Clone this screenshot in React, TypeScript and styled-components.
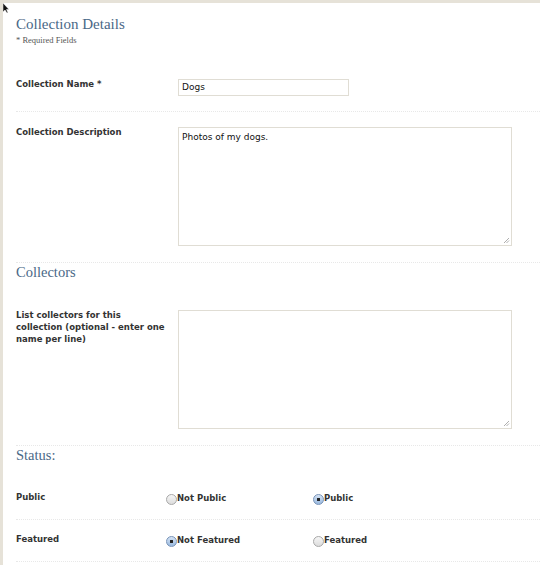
import React from 'react'
import styled, { createGlobalStyle } from 'styled-components'

const GlobalStyle = createGlobalStyle`
  html, body {
    margin: 0;
    padding: 0;
    background: #ffffff;
  }
  body {
    font-family: "DejaVu Sans", Verdana, sans-serif;
    color: #333;
  }
`

const Page = styled.div`
  position: relative;
  width: 540px;
  height: 565px;
  box-sizing: border-box;
  border-top: 3px solid #e6e2d8;
  border-left: 3px solid #e6e2d8;
  overflow: hidden;
  background: #fff;
`

const Content = styled.div`
  padding-left: 13px;
`

const TitleBlock = styled.div`
  height: 61px;
  box-sizing: border-box;
  padding-top: 12px;
`

const Heading = styled.h2<{ $size?: number }>`
  margin: 0;
  font-family: "Liberation Serif", "Times New Roman", serif;
  font-weight: normal;
  font-size: ${p => p.$size ?? 14.5}px;
  line-height: 18px;
  color: #4a6887;
`

const Required = styled.div`
  margin-top: 2px;
  font-family: "Liberation Serif", "Times New Roman", serif;
  font-size: 8.5px;
  color: #555;
`

const SectionHead = styled.div`
  height: 32px;
  box-sizing: border-box;
`

const Row = styled.div<{ $pad?: number }>`
  display: grid;
  grid-template-columns: 162px 1fr;
  padding: 15px 0 ${p => p.$pad ?? 15}px;
  border-bottom: 1px dotted #e8e8e8;
`

const RadioRow = styled.div`
  display: grid;
  grid-template-columns: 150px 147px 147px;
  align-items: start;
  height: 42px;
  box-sizing: border-box;
  padding-top: 14px;
  border-bottom: 1px dotted #e8e8e8;
`

const Label = styled.div`
  font-size: 8.5px;
  font-weight: bold;
  line-height: 12px;
  color: #333;
  margin-top: -1px;
  padding-right: 10px;
`

const TextInput = styled.div`
  width: 171px;
  height: 17px;
  box-sizing: border-box;
  border: 1px solid #e0ddd4;
  font-size: 9px;
  line-height: 15px;
  padding-left: 3px;
  color: #111;
`

const TextArea = styled.div`
  position: relative;
  width: 334px;
  height: 119px;
  box-sizing: border-box;
  border: 1px solid #e0ddd4;
  font-size: 9px;
  line-height: 12px;
  padding: 3px 3px;
  color: #111;
`

const Grip = styled.svg`
  position: absolute;
  right: 1px;
  bottom: 1px;
`

const Option = styled.label`
  display: flex;
  align-items: center;
  font-size: 8.5px;
  font-weight: bold;
  line-height: 12px;
  color: #333;
  margin-top: -1px;
`

const RadioDot = styled.span<{ $on?: boolean }>`
  display: inline-block;
  width: 11px;
  height: 11px;
  box-sizing: border-box;
  border-radius: 50%;
  margin-top: 3px;
  border: 1px solid ${p => (p.$on ? '#7893b8' : '#a8a8a8')};
  background: ${p =>
    p.$on
      ? 'radial-gradient(circle at 50% 50%, #222 0 1.4px, transparent 1.8px), linear-gradient(#d6e4f5, #98b8de)'
      : 'linear-gradient(#f6f6f6, #dcdcdc)'};
`

const Cursor = styled.svg`
  position: absolute;
  left: 0;
  top: 0;
`

const Resize = () => (
  <Grip width="7" height="7" viewBox="0 0 7 7">
    <path d="M6 1 L1 6 M6 3.5 L3.5 6" stroke="#999" strokeWidth="0.8" />
  </Grip>
)

const Radio = ({ on, text }: { on?: boolean; text: string }) => (
  <Option>
    <RadioDot $on={on} />
    {text}
  </Option>
)

export default function App() {
  return (
    <>
      <GlobalStyle />
      <Page>
        <Content>
          <TitleBlock>
            <Heading $size={15}>Collection Details</Heading>
            <Required>* Required Fields</Required>
          </TitleBlock>

          <Row>
            <Label>Collection Name *</Label>
            <TextInput>Dogs</TextInput>
          </Row>

          <Row $pad={16}>
            <Label>Collection Description</Label>
            <TextArea>
              Photos of my dogs.
              <Resize />
            </TextArea>
          </Row>

          <SectionHead>
            <Heading>Collectors</Heading>
          </SectionHead>

          <Row $pad={16}>
            <Label>List collectors for this collection (optional - enter one name per line)</Label>
            <TextArea>
              <Resize />
            </TextArea>
          </Row>

          <SectionHead>
            <Heading>Status:</Heading>
          </SectionHead>

          <RadioRow>
            <Label>Public</Label>
            <Radio text="Not Public" />
            <Radio on text="Public" />
          </RadioRow>

          <RadioRow>
            <Label>Featured</Label>
            <Radio on text="Not Featured" />
            <Radio text="Featured" />
          </RadioRow>
        </Content>
        <Cursor width="8" height="10" viewBox="0 0 8 10">
          <path d="M0 0 L0 9 L2 7 L4 10 L5 9.5 L3.5 6.5 L6 6.5 Z" fill="#111" stroke="#fff" strokeWidth="0.5" />
        </Cursor>
      </Page>
    </>
  )
}
